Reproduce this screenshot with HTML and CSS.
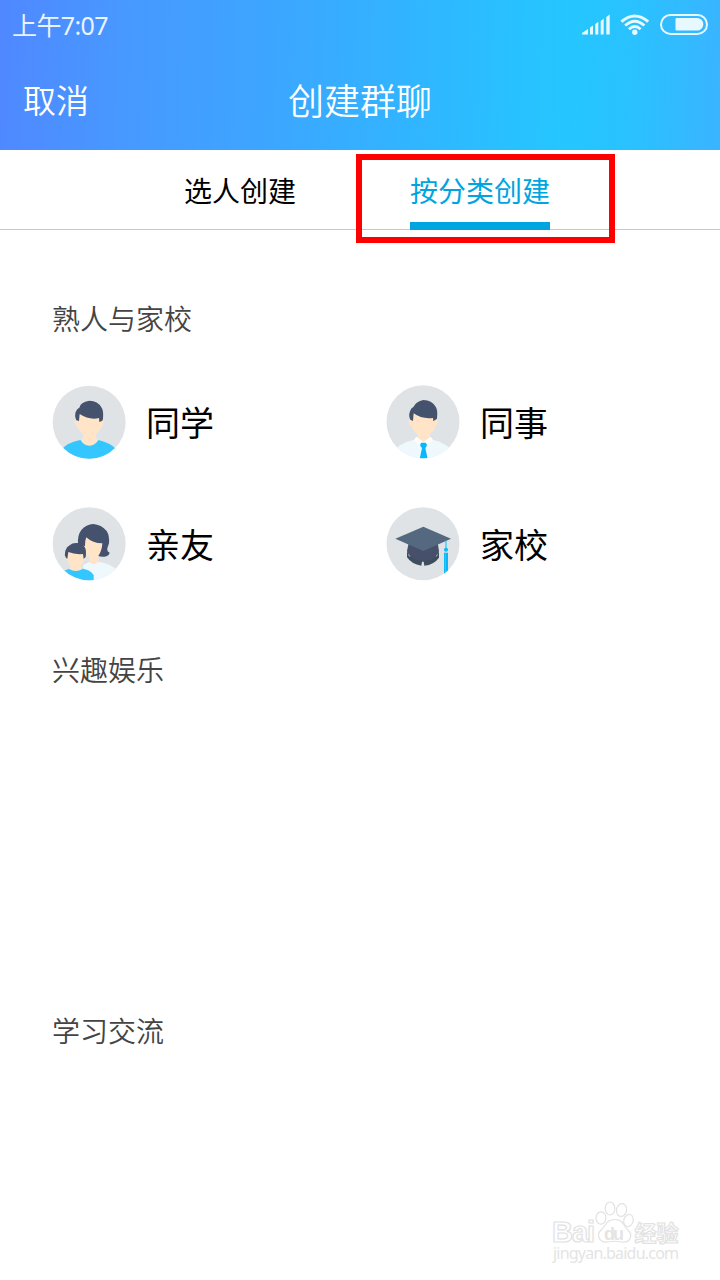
FILE: index.html
```html
<!DOCTYPE html>
<html lang="zh-CN">
<head>
  <meta charset="UTF-8" />
  <meta name="viewport" content="width=device-width, initial-scale=1" />
  <title>创建群聊</title>
  <link rel="stylesheet" href="styles.css">
</head>
<body>

  <header class="header">
    <div class="status-bar">
      <span class="time">上午7:07</span>
      <svg class="status-icons" width="128" height="24" viewBox="0 0 128 24">
        <g fill="#e8f8ff">
          <path d="M0 22.5 V21 L6 17 V22.5 Z" />
          <path d="M8 15.5 L11 13.5 V22.5 H8 Z" />
          <path d="M13.3 12 L16.3 9.7 V22.5 H13.3 Z" />
          <path d="M18.7 9 L21.7 6.5 V22.5 H18.7 Z" />
          <path d="M24.3 5 L27.7 2.5 V22.5 H24.3 Z" />
          <circle cx="52.8" cy="20.3" r="2.7" />
          <path d="M94.5 6 H115 a6.3 6.3 0 0 1 0 12.6 H94.5 a1 1 0 0 1 -1 -1 V7 a1 1 0 0 1 1 -1 Z" />
        </g>
        <g fill="none" stroke="#e8f8ff">
          <path d="M39.4 9.6 Q52.8 -1.6 66.2 9.6" stroke-width="3" />
          <path d="M43.2 13.5 Q52.8 5 62.4 13.5" stroke-width="2.9" />
          <path d="M47 17.3 Q52.8 11.6 58.6 17.3" stroke-width="2.8" />
          <rect x="79" y="2.9" width="46" height="19" rx="9.5" stroke-width="2" />
        </g>
      </svg>
    </div>
    <div class="nav">
      <span class="cancel">取消</span>
      <h1>创建群聊</h1>
    </div>
  </header>

  <nav class="tabs">
    <div class="tab">选人创建</div>
    <div class="tab active">按分类创建
      <div class="highlight"></div>
    </div>
  </nav>

  <main class="content">
    <section class="group-section">
      <h2>熟人与家校</h2>
      <div class="category-grid">

        <div class="category">
          <svg class="avatar" viewBox="36 30 222 222">
            <clipPath id="clip1"><circle cx="147.500" cy="141.500" r="109.500" /></clipPath>
            <g clip-path="url(#clip1)">
              <rect x="36" y="30" width="222" height="222" fill="#dfe3e6" />
              <path d="M66 222 Q82 203 121 195 Q148 213 175 195 Q212 204 228 222 V255 H66 Z" fill="#33c6ff" />
              <path d="M108 132 Q103 135 104 144 Q105 152 111 154 Q118 170 130 178 V188 Q129 192 122 195 Q129 211 148 212 Q167 211 175 195 Q168 192 168 187 V178 Q180 168 185 154 Q191 152 191 143 Q191 135 187 132 L178 112 H118 Z" fill="#ffe4c8" />
              <path d="M109 136 Q103 125 107 111 Q111 100 118 98 Q121 81 148 77 Q174 78 184 97 Q191 105 189 132 Q188 137 184 139 L178 141 L177 129 Q148 136 119 117 L117 138 Z" fill="#45526d" />
            </g>
          </svg>
          <span>同学</span>
        </div>

        <div class="category">
          <svg class="avatar" viewBox="30 30 222 222">
            <clipPath id="clip2"><circle cx="141" cy="140.500" r="109.500" /></clipPath>
            <g clip-path="url(#clip2)">
              <rect x="30" y="30" width="222" height="222" fill="#dfe3e6" />
              <path d="M58 222 Q78 201 116 194 H168 Q206 202 224 222 V255 H58 Z" fill="#eff9fd" />
              <path d="M102 132 Q97 135 98 143 Q99 151 106 153 Q112 169 124 178 V189 L143 202 L162 189 V177 Q174 168 179 153 Q185 151 186 143 Q185 135 181 132 L173 112 H112 Z" fill="#ffe4c8" />
              <path d="M121 185 L143 202 L129 211 L114 195 Z M164 185 L143 202 L157 211 L171 195 Z" fill="#ffffff" />
              <path d="M103 134 Q97 123 102 109 Q105 99 112 96 Q120 79 142 75 Q168 76 178 94 Q186 103 183 131 L172 139 L171 129 Q137 133 113 115 L111 138 Z" fill="#45526d" />
              <path d="M136 203 H149 Q155 208 152 214 L148 219 L155 252 H131 L138 219 L133 213 Q131 207 136 203 Z" fill="#08b8fa" />
            </g>
          </svg>
          <span>同事</span>
        </div>

        <div class="category">
          <svg class="avatar" viewBox="36 30 222 222">
            <clipPath id="clip3"><circle cx="147.500" cy="140.500" r="109.500" /></clipPath>
            <g clip-path="url(#clip3)">
              <rect x="36" y="30" width="222" height="222" fill="#dfe3e6" />
              <path d="M130 204 Q142 198 149 194 H176 Q211 200 230 218 V255 H130 Z" fill="#eff9fd" />
              <path d="M132 118 H186 V160 Q183 171 175 178 V194 Q163 209 148 195 V180 L130 165 Z" fill="#ffe4c8" />
              <path d="M114 140 Q112 115 124 99 Q138 82 160 81 Q184 83 200 102 Q209 116 207 139 L202 154 Q201 165 209 167 Q207 177 193 179 Q182 180 175 177 Q186 161 187 139 Q158 139 139 121 Q134 132 135 148 Z" fill="#45526d" />
              <path d="M70 224 Q78 216 94 215 H128 Q153 219 161 235 V255 H70 Z" fill="#33c6ff" />
              <path d="M77 176 L82 162 H132 L139 181 Q137 187 131 189 Q128 202 122 206 L127 217 Q107 228 87 216 L93 207 Q86 201 83 190 Q76 187 77 176 Z" fill="#ffe4c8" />
              <path d="M78 183 Q72 173 76 161 Q80 149 89 145 Q98 136 113 138 Q128 140 134 150 Q140 159 137 180 L131 186 L129 171 Q104 173 85 165 L82 185 Z" fill="#45526d" />
            </g>
          </svg>
          <span>亲友</span>
        </div>

        <div class="category">
          <svg class="avatar" viewBox="30 30 222 222">
            <clipPath id="clip4"><circle cx="141" cy="140.500" r="109.500" /></clipPath>
            <g clip-path="url(#clip4)">
              <rect x="30" y="30" width="222" height="222" fill="#dfe3e6" />
              <path d="M93 160 L99 178 H183 L189 160 V182 Q174 203 145 206 L143 194 H138 L136 206 Q107 202 93 181 Z" fill="#3d4e5c" />
              <path d="M98 138 H185 L189 162 Q183 184 158 190 Q141 194 124 190 Q99 182 93 162 Z" fill="#46506b" />
              <path d="M142 89 L225 125 L142 162 L58 125 Z" fill="#54687f" />
              <path d="M210 131 V155" stroke="#33c6ff" stroke-width="4" />
              <circle cx="210" cy="158" r="6" fill="#08b8fa" />
              <path d="M204 167 H216 V224 L204 231 Z" fill="#08b8fa" />
              <path d="M208 167 V229" stroke="#52cffb" stroke-width="2" />
            </g>
          </svg>
          <span>家校</span>
        </div>

      </div>
    </section>

    <section class="group-section">
      <h2>兴趣娱乐</h2>
    </section>

    <section class="group-section">
      <h2>学习交流</h2>
    </section>
  </main>

  <svg class="watermark" viewBox="0 0 180 90">
    <g fill="#ffffff" stroke="#e2e2e2" stroke-width="1.2">
      <text class="wm-latin" x="12" y="52" textLength="43">Bai</text>
      <path d="M75 29.500 C66 29.500 66 36 61 40 C56 45 59 53 68 52 Q75 50.500 82 52 C91 53 93 45 88 40 C83 36 84 29.500 75 29.500 Z" />
      <ellipse cx="61" cy="28" rx="5" ry="6.200" />
      <ellipse cx="70" cy="18.500" rx="4.800" ry="6.500" />
      <ellipse cx="81.500" cy="20" rx="5" ry="6.500" transform="rotate(12 81.500 20)" />
      <ellipse cx="88.500" cy="30.500" rx="4.700" ry="6.200" transform="rotate(15 88.500 30.500)" />
      <text class="wm-cn" x="94.500" y="51" textLength="44">经验</text>
    </g>
    <text class="wm-du" x="64" y="49.500" textLength="20">du</text>
    <text class="wm-url" x="13" y="69" textLength="126">jingyan.baidu.com</text>
  </svg>

</body>
</html>
```

FILE: styles.css
```css
* {
  box-sizing: border-box;
}

body {
  font-family: "Noto Sans CJK SC", "Noto Sans", sans-serif;
  margin: 0;
  height: 1280px;
  background: #fff;
  color: #000;
  position: relative;
  overflow: hidden;
}

.header {
  height: 150px;
  color: #fff;
  background: linear-gradient(92deg, #5088ff 0%, #4799ff 18%, #3ea4ff 35%, #32b3ff 55%, #29c0ff 70%, #25c6ff 79%, #29c2ff 87%, #3ab4ff 100%);
}

.status-bar {
  height: 50px;
  padding: 0 10px 0 12px;
  display: flex;
  justify-content: space-between;
  align-items: center;
}

.time {
  font-family: "Noto Sans", "Noto Sans CJK SC", sans-serif;
  font-size: 25px;
  line-height: 50px;
  letter-spacing: -0.6px;
  color: #eaf3ff;
}

.status-icons {
  margin-bottom: 2px;
}

.nav {
  height: 100px;
  padding: 0 23px 3px;
  display: grid;
  grid-template-columns: 1fr auto 1fr;
  align-items: center;
}

.cancel {
  font-size: 33px;
  font-weight: 350;
}

h1 {
  margin: 0;
  font-size: 36px;
  font-weight: 350;
}

.tabs {
  height: 80px;
  display: flex;
  justify-content: center;
  border-bottom: 1px solid #c8c8c8;
}

.tab {
  width: 240px;
  height: 80px;
  font-size: 28px;
  line-height: 80px;
  text-align: center;
  position: relative;
}

.tab.active {
  color: #00a5e0;
}

.tab.active::after {
  content: "";
  position: absolute;
  left: 50px;
  bottom: 0;
  width: 140px;
  height: 8px;
  background: #00a5e0;
}

.highlight {
  position: absolute;
  left: -4px;
  top: 4px;
  width: 259px;
  height: 89px;
  border: 6px solid #f00;
}

.content {
  padding: 67px 52px 0;
}

h2 {
  margin: 0;
  font-size: 28px;
  line-height: 42px;
  font-weight: 350;
  color: #444;
}

.category-grid {
  display: grid;
  grid-template-columns: 334px 1fr;
  row-gap: 48px;
  margin-top: 46px;
}

.category {
  display: flex;
  align-items: center;
  gap: 20px;
  font-size: 34px;
  line-height: 74px;
  height: 74px;
}

.avatar {
  width: 74px;
  height: 74px;
}

.group-section + .group-section {
  margin-top: 67px;
}

.group-section:nth-child(2) {
  height: 294px;
}

.watermark {
  position: absolute;
  left: 540px;
  top: 1190px;
  width: 180px;
  height: 90px;
}

.wm-latin {
  font: bold 29px "Liberation Sans", sans-serif;
}

.wm-du {
  font: bold 18px "Liberation Sans", sans-serif;
  fill: #e4e4e4;
}

.wm-cn {
  font: bold 22px "Noto Sans CJK SC", sans-serif;
}

.wm-url {
  font: 16px "Noto Sans", sans-serif;
  fill: #e4e4e4;
}
```
